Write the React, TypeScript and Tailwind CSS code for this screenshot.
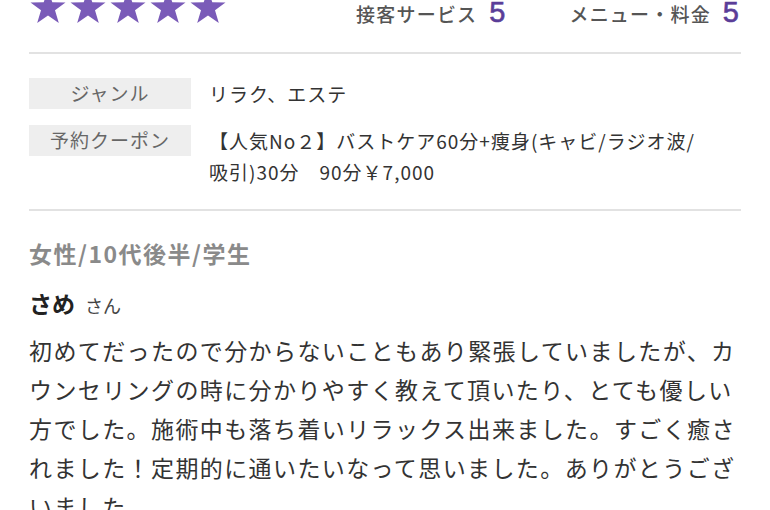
import React from "react";

// 口コミ詳細: 評価・クーポン・本文
const font = { fontFamily: '"Noto Sans CJK JP", "Noto Sans", sans-serif' };

function Star() {
  return (
    <svg width="36" height="34" viewBox="0 0 36 34">
      <polygon
        points="18,0 22.3,12.2 35.5,12.4 25,20.3 28.8,33 18,25.4 7.2,33 11,20.3 0.5,12.4 13.7,12.2"
        fill="#7a5bb8"
      />
    </svg>
  );
}

function Score({ label, value }: { label: string; value: number }) {
  return (
    <div className="flex items-baseline gap-[12px]">
      <span className="text-[19px] leading-[24px] font-medium text-[#555] tracking-[1.2px]">{label}</span>
      <span
        className="text-[29px] leading-[24px] text-[#5a3d98] [-webkit-text-stroke:0.6px_#5a3d98]"
        style={{ fontFamily: '"Liberation Sans", Arial, sans-serif' }}
      >
        {value}
      </span>
    </div>
  );
}

function InfoRow({ label, children }: { label: string; children: React.ReactNode }) {
  return (
    <div className="flex items-start gap-[18px]">
      <div className="w-[162px] h-[31px] shrink-0 bg-[#eeeeee] flex items-center justify-center text-[19px] text-[#666] tracking-[1px]">
        {label}
      </div>
      <div className="flex-1 text-[19px] leading-[31px] text-[#333] tracking-[1px]">{children}</div>
    </div>
  );
}

export default function App() {
  return (
    <div className="w-[770px] h-[510px] overflow-hidden bg-white px-[29px]" style={font}>
      <div className="h-[24px] flex items-start justify-between pr-[2px]">
        <div className="-mt-[10px] flex gap-[4px] pl-[1px]">
          {[0, 1, 2, 3, 4].map((i) => (
            <Star key={i} />
          ))}
        </div>
        <div className="flex gap-[64px]">
          <Score label="接客サービス" value={5} />
          <Score label="メニュー・料金" value={5} />
        </div>
      </div>

      <div className="mt-[28px] border-t-2 border-[#e2e2e2]" />

      <div className="pt-[24px] pb-[22px] flex flex-col gap-[16px]">
        <InfoRow label="ジャンル">リラク、エステ</InfoRow>
        <InfoRow label="予約クーポン">
          【人気No２】バストケア60分+痩身(キャビ/ラジオ波/
          <br />
          吸引)30分　90分￥7,000
        </InfoRow>
      </div>

      <div className="border-t-2 border-[#e2e2e2]" />

      <div className="pt-[27px] text-[23px] font-bold text-[#8a8a8a] leading-[30px] tracking-[1.5px]">
        女性/10代後半/学生
      </div>
      <div className="mt-[20px] flex items-baseline gap-[10px] leading-[30px]">
        <span className="text-[23px] font-bold text-[#222]">さめ</span>
        <span className="text-[18px] text-[#444]">さん</span>
      </div>
      <p className="mt-[11px] w-[712px] text-[23px] leading-[39px] tracking-[1.4px] text-[#333]">
        初めてだったので分からないこともあり緊張していましたが、カウンセリングの時に分かりやすく教えて頂いたり、とても優しい方でした。施術中も落ち着いリラックス出来ました。すごく癒されました！定期的に通いたいなって思いました。ありがとうございました。
      </p>
    </div>
  );
}
